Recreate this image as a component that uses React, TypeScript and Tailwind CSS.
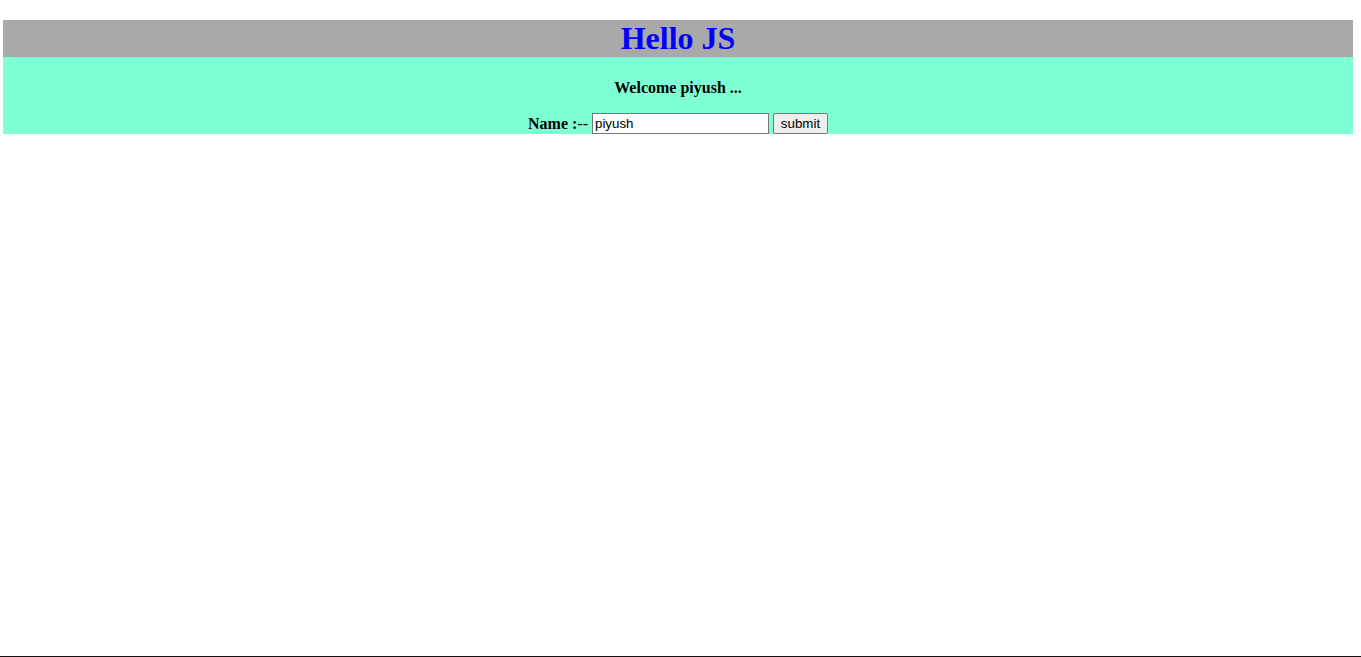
import React from "react";

export default function App() {
  return (
    <div className="h-[657px] flex flex-col bg-white overflow-hidden">
      <div className="flex-1 pt-[20px] pl-[3px]">
        <div className="w-[1350px]">
          <h1 className="bg-[#a9a9a9] text-[#0000ff] text-center font-bold text-[32px] leading-[37px] font-['Liberation_Serif',serif]">
            Hello JS
          </h1>
          <div className="bg-[#7fffd4] text-center font-['Liberation_Serif',serif] text-black">
            <h4 className="pt-[22px] text-[16px] font-bold leading-[18px]">Welcome piyush ...</h4>
            <div className="mt-[16px] flex justify-center items-center h-[21px] gap-[4px] text-[16px]">
              <span className="leading-[18px]">
                <b>Name :</b>--
              </span>
              <input
                defaultValue="piyush"
                className="w-[177px] h-[21px] border border-[#767676] bg-white px-[2px] text-[13.33px] font-['Liberation_Sans',Arial,sans-serif] text-black outline-none"
              />
              <button className="h-[21px] w-[55px] border border-[#767676] rounded-[2px] bg-[#efefef] text-[13.33px] font-['Liberation_Sans',Arial,sans-serif] text-black leading-none">
                submit
              </button>
            </div>
          </div>
        </div>
      </div>
      <div className="h-px bg-[#141014]" />
    </div>
  );
}
